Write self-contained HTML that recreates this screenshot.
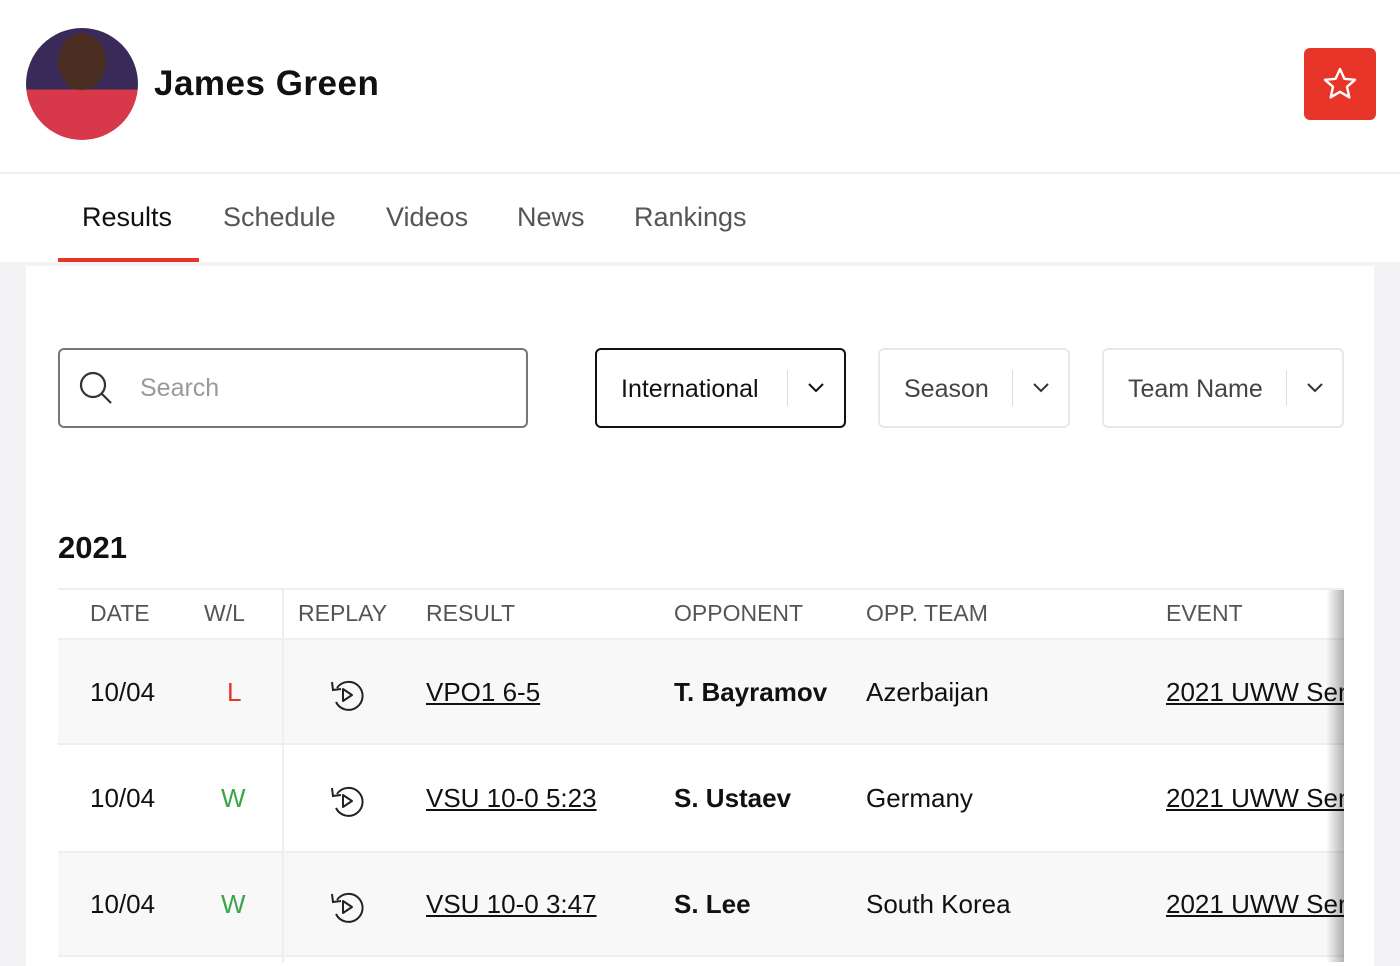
<!DOCTYPE html>
<html><head><style>
*{margin:0;padding:0;box-sizing:border-box}
body{width:1400px;height:962px;overflow:hidden;background:#f4f4f6;font-family:"Liberation Sans","DejaVu Sans",sans-serif;color:#111;position:relative}
.top{position:absolute;left:0;top:0;width:1400px;height:262px;background:#fff}
.hline{position:absolute;left:0;top:172px;width:1400px;height:2px;background:#f0f0f2}
.avatar{position:absolute;left:26px;top:28px;width:112px;height:112px;border-radius:50%;background:radial-gradient(ellipse 22% 26% at 50% 30%,#4a2e22 0 95%,transparent 100%),linear-gradient(#3a2a5a 0 55%,#d8394a 55%);overflow:hidden}
.name{position:absolute;left:154px;top:64px;font-size:35px;font-weight:bold;letter-spacing:0.5px}
.fav{position:absolute;left:1304px;top:48px;width:72px;height:72px;background:#e8352a;border-radius:6px}
.tabs a{position:absolute;top:202px;font-size:27px;color:#555;text-decoration:none}
.uline{position:absolute;left:58px;top:258px;width:141px;height:4px;background:#e8352a}
.card{position:absolute;left:26px;top:266px;width:1348px;height:700px;background:#fff}
.search{position:absolute;left:58px;top:348px;width:470px;height:80px;border:2px solid #777;border-radius:6px}
.search span{position:absolute;left:80px;top:24px;font-size:25px;color:#999}
.dd{position:absolute;top:348px;height:80px;border-radius:6px;border:2px solid #e8e8ea;font-size:25px;color:#444}
.dd span{position:absolute;left:24px;top:25px}
.dd i{position:absolute;top:20px;width:1px;height:36px;background:#ddd}
.dd svg{position:absolute;top:32px}
.yr{position:absolute;left:58px;top:530px;font-size:31px;font-weight:bold}
.row{position:absolute;left:58px;width:1286px}
.th{position:absolute;font-size:23px;color:#555;top:600px;white-space:nowrap}
.td{position:absolute;font-size:26px;white-space:nowrap}
.shade{position:absolute;left:1326px;top:590px;width:18px;height:372px;background:linear-gradient(90deg,rgba(0,0,0,0),rgba(0,0,0,.3))}
</style></head><body>
<div class="top"></div><div class="hline"></div>
<div class="avatar"></div>
<div class="name">James Green</div>
<div class="fav"><svg width="72" height="72" viewBox="0 0 72 72"><path d="M36 21 L40.4 30.8 L51 31.8 L43 38.8 L45.3 49.3 L36 43.8 L26.7 49.3 L29 38.8 L21 31.8 L31.6 30.8Z" fill="none" stroke="#fff" stroke-width="2.4" stroke-linejoin="round"/></svg></div>
<div class="tabs"><a style="left:82px;color:#111">Results</a><a style="left:223px">Schedule</a><a style="left:386px">Videos</a><a style="left:517px">News</a><a style="left:634px">Rankings</a></div>
<div class="uline"></div>
<div class="card"></div>
<div class="search"><svg style="position:absolute;left:18px;top:20px" width="36" height="36" viewBox="0 0 36 36"><circle cx="15" cy="15" r="12" fill="none" stroke="#333" stroke-width="2.2"/><path d="M24 24 L33 33" stroke="#333" stroke-width="2.2"/></svg><span>Search</span></div>
<div class="dd" style="left:595px;width:251px;border-color:#111;color:#111"><span>International</span><i style="left:190px"></i><svg style="left:210px" width="18" height="12"><path d="M2 2 L9 9 L16 2" fill="none" stroke="#111" stroke-width="2"/></svg></div>
<div class="dd" style="left:878px;width:192px"><span>Season</span><i style="left:132px"></i><svg style="left:152px" width="18" height="12"><path d="M2 2 L9 9 L16 2" fill="none" stroke="#333" stroke-width="2"/></svg></div>
<div class="dd" style="left:1102px;width:242px"><span>Team Name</span><i style="left:182px"></i><svg style="left:202px" width="18" height="12"><path d="M2 2 L9 9 L16 2" fill="none" stroke="#333" stroke-width="2"/></svg></div>
<div class="yr">2021</div>
<div class="row" style="top:588px;height:2px;background:#eee"></div>
<div class="row" style="top:638px;height:107px;background:#f8f8f8;border-top:2px solid #eee;border-bottom:2px solid #eee"></div>
<div class="row" style="top:851px;height:106px;background:#f8f8f8;border-top:2px solid #eee;border-bottom:2px solid #eee"></div>
<div style="position:absolute;left:282px;top:590px;width:2px;height:372px;background:#eee"></div>
<div class="th" style="left:90px">DATE</div><div class="th" style="left:204px">W/L</div><div class="th" style="left:298px">REPLAY</div><div class="th" style="left:426px">RESULT</div><div class="th" style="left:674px">OPPONENT</div><div class="th" style="left:866px">OPP. TEAM</div><div class="th" style="left:1166px">EVENT</div>
<div style="position:absolute;left:0;top:0;width:1344px;height:962px;overflow:hidden">
<div class="td" style="left:90px;top:677px">10/04</div><div class="td" style="left:227px;top:677px;color:#e8352a">L</div>
<div class="td" style="left:426px;top:677px"><u>VPO1 6-5</u></div><div class="td" style="left:674px;top:677px;font-weight:bold">T. Bayramov</div><div class="td" style="left:866px;top:677px">Azerbaijan</div><div class="td" style="left:1166px;top:677px"><u>2021 UWW Senior</u></div>
<div class="td" style="left:90px;top:783px">10/04</div><div class="td" style="left:221px;top:783px;color:#3aa64a">W</div>
<div class="td" style="left:426px;top:783px"><u>VSU 10-0 5:23</u></div><div class="td" style="left:674px;top:783px;font-weight:bold">S. Ustaev</div><div class="td" style="left:866px;top:783px">Germany</div><div class="td" style="left:1166px;top:783px"><u>2021 UWW Senior</u></div>
<div class="td" style="left:90px;top:889px">10/04</div><div class="td" style="left:221px;top:889px;color:#3aa64a">W</div>
<div class="td" style="left:426px;top:889px"><u>VSU 10-0 3:47</u></div><div class="td" style="left:674px;top:889px;font-weight:bold">S. Lee</div><div class="td" style="left:866px;top:889px">South Korea</div><div class="td" style="left:1166px;top:889px"><u>2021 UWW Senior</u></div>
</div>
<svg style="position:absolute;left:328px;top:677px" width="40" height="36" viewBox="0 0 40 36"><path d="M9 11 A14 14 0 1 1 8 25" fill="none" stroke="#222" stroke-width="2"/><path d="M4 5 L5 13 L13 12" fill="none" stroke="#222" stroke-width="2"/><path d="M15 12 L24 18 L15 24Z" fill="none" stroke="#222" stroke-width="2" stroke-linejoin="round"/></svg>
<svg style="position:absolute;left:328px;top:783px" width="40" height="36" viewBox="0 0 40 36"><path d="M9 11 A14 14 0 1 1 8 25" fill="none" stroke="#222" stroke-width="2"/><path d="M4 5 L5 13 L13 12" fill="none" stroke="#222" stroke-width="2"/><path d="M15 12 L24 18 L15 24Z" fill="none" stroke="#222" stroke-width="2" stroke-linejoin="round"/></svg>
<svg style="position:absolute;left:328px;top:889px" width="40" height="36" viewBox="0 0 40 36"><path d="M9 11 A14 14 0 1 1 8 25" fill="none" stroke="#222" stroke-width="2"/><path d="M4 5 L5 13 L13 12" fill="none" stroke="#222" stroke-width="2"/><path d="M15 12 L24 18 L15 24Z" fill="none" stroke="#222" stroke-width="2" stroke-linejoin="round"/></svg>
<div class="shade"></div>
</body></html>
